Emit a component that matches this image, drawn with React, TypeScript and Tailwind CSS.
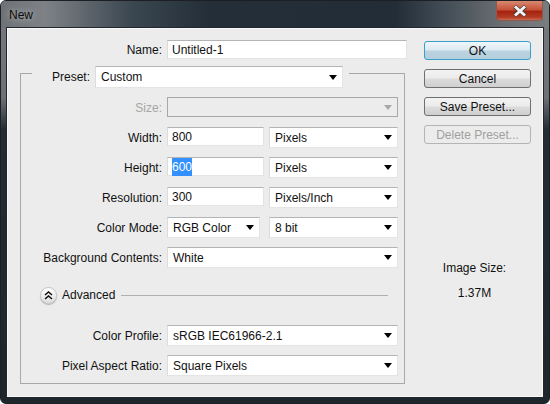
const font = "font-['Liberation_Sans',Arial,sans-serif]";

const Arrow = ({ disabled }: { disabled?: boolean }) => (
  <svg width="8" height="5" viewBox="0 0 8 5" className="shrink-0">
    <path d="M0 0H8L4 5Z" fill={disabled ? '#a8a8a8' : '#000'} />
  </svg>
);

const Select = ({ value, className }: { value: string; className: string }) => (
  <div
    className={`flex h-[21px] items-center justify-between border border-[#e4e4e4] border-t-[#b4b4b4] border-l-[#dcdcdc] bg-white pl-[5px] pr-[5px] text-[12px] text-[#111] ${className}`}
  >
    <span>{value}</span>
    <Arrow />
  </div>
);

const Input = ({ children, className }: { children: React.ReactNode; className: string }) => (
  <div
    className={`flex h-[19px] shrink-0 items-center border border-[#e4e4e4] border-t-[#b4b4b4] border-l-[#dcdcdc] bg-white pl-[4px] pt-[1px] text-[12px] text-[#111] ${className}`}
  >
    {children}
  </div>
);

const Row = ({ label, children, muted }: { label: string; children: React.ReactNode; muted?: boolean }) => (
  <div className="mt-[9px] flex h-[21px] items-start gap-[5px]">
    <div
      className={`w-[141px] shrink-0 pt-[2px] text-right text-[12px] ${muted ? 'text-[#a6a6a6]' : 'text-[#111]'}`}
    >
      {label}
    </div>
    {children}
  </div>
);

const Button = ({ label, primary, disabled }: { label: string; primary?: boolean; disabled?: boolean }) => (
  <div
    className={`flex h-[19px] w-[107px] items-center justify-center rounded-[3px] border text-[12px] ${
      primary
        ? 'border-[#3c9fcb] bg-[linear-gradient(#eef6fa_0%,#dceaf2_48%,#bcd2df_52%,#b4cedd_100%)] text-[#111]'
        : disabled
          ? 'border-[#b4b4b4] bg-[#ececec] text-[#a0a0a0]'
          : 'border-[#6f6f6f] bg-[linear-gradient(#f3f3f3_0%,#ebebeb_48%,#dcdcdc_52%,#cfcfcf_100%)] text-[#111]'
    }`}
  >
    {label}
  </div>
);

export default function App() {
  return (
    <div className={`h-[404px] w-[550px] bg-white ${font}`}>
      <div className="flex h-full flex-col rounded-[6px] border border-[#1c2024] bg-[linear-gradient(#777b7f_0%,#6d7175_24%,#222c34_32%,#1d262d_100%)] px-[6px] pb-[6px]">
        <div className="-mx-[6px] flex h-[27px] shrink-0 justify-between rounded-t-[5px] bg-[linear-gradient(90deg,#6e7276_0%,#7e8286_8%,#3a4650_24%,#232e38_38%,#222d37_72%,#3f4a54_80%,#6d7073_92%,#7a7d80_100%)] pl-[8px] pr-[6px]">
          <div className="pt-[6px] text-[12px] leading-[16px] text-[#0c0c0c] [text-shadow:0_0_6px_#c8c8c8]">New</div>
          <div className="flex h-[20px] w-[47px] items-center justify-center rounded-b-[4px] border border-t-0 border-[#8c5a52] bg-[linear-gradient(#d88a70_0%,#c4533a_45%,#a8230f_55%,#b23a22_85%,#c96b52_100%)]">
            <svg width="16" height="12" viewBox="0 0 16 12">
              <path d="M2.5 1.5 L13.5 10.5 M13.5 1.5 L2.5 10.5" stroke="#4a3a3a" strokeWidth="4.5" />
              <path d="M3 1.5 L13 10.5 M13 1.5 L3 10.5" stroke="#f4f4f4" strokeWidth="3" />
            </svg>
          </div>
        </div>
        <div className="flex min-h-0 flex-1 border border-[#f8f8f8] bg-[#ececec] outline outline-1 outline-[#20262c]">
          <div className="w-[400px] shrink-0 pl-[12px]">
            <div className="mt-[11px] flex h-[20px] items-start gap-[5px]">
              <div className="w-[142px] shrink-0 pt-[1px] text-right text-[12px] text-[#111]">Name:</div>
              <Input className="w-[240px]">Untitled-1</Input>
            </div>
            <div className="mt-[13px] h-[311px] w-[385px] border border-[#a8a8a8]">
              <div className="-mt-[8px] ml-[11px] flex h-[22px] w-fit items-center gap-[5px] bg-[#ececec] pr-[6px]">
                <div className="w-[58px] text-right text-[12px] text-[#111]">Preset:</div>
                <Select value="Custom" className="h-[22px] w-[248px]" />
              </div>
              <div className="mt-[1px]">
                <Row label="Size:" muted>
                  <div className="flex h-[20px] w-[231px] items-center justify-end border border-[#a8a8a8] bg-[#ececec] pr-[5px]">
                    <Arrow disabled />
                  </div>
                </Row>
                <Row label="Width:">
                  <Input className="w-[97px]">800</Input>
                  <Select value="Pixels" className="w-[129px]" />
                </Row>
                <Row label="Height:">
                  <Input className="w-[97px]">
                    <span className="bg-[#3390ff] text-white">600</span>
                  </Input>
                  <Select value="Pixels" className="w-[129px]" />
                </Row>
                <Row label="Resolution:">
                  <Input className="w-[97px]">300</Input>
                  <Select value="Pixels/Inch" className="w-[129px]" />
                </Row>
                <Row label="Color Mode:">
                  <Select value="RGB Color" className="w-[93px]" />
                  <Select value="8 bit" className="ml-[4px] w-[129px]" />
                </Row>
                <Row label="Background Contents:">
                  <Select value="White" className="w-[231px]" />
                </Row>
                <div className="mt-[17px] flex h-[20px] items-center pl-[19px]">
                  <div className="flex h-[17px] w-[17px] items-center justify-center rounded-full border border-[#c4c4c4] bg-[linear-gradient(#ffffff,#dedede)] shadow-[0_1px_1px_#b0b0b0]">
                    <svg width="9" height="9" viewBox="0 0 9 9">
                      <path d="M1 4 L4.5 1 L8 4 M1 8 L4.5 5 L8 8" fill="none" stroke="#111" strokeWidth="1.5" />
                    </svg>
                  </div>
                  <span className="ml-[5px] text-[12px] text-[#111]">Advanced</span>
                  <div className="ml-[6px] h-px w-[267px] bg-[#b0b0b0]" />
                </div>
                <div className="h-[11px]" />
                <Row label="Color Profile:">
                  <Select value="sRGB IEC61966-2.1" className="w-[231px]" />
                </Row>
                <Row label="Pixel Aspect Ratio:">
                  <Select value="Square Pixels" className="w-[231px]" />
                </Row>
              </div>
            </div>
          </div>
          <div className="ml-[16px] flex w-[107px] flex-col gap-[9px] pt-[12px]">
            <Button label="OK" primary />
            <Button label="Cancel" />
            <Button label="Save Preset..." />
            <Button label="Delete Preset..." disabled />
            <div className="mt-[107px] pr-[6px] text-center text-[12px] leading-[16px] text-[#111]">Image Size:</div>
            <div className="pr-[6px] text-center text-[12px] leading-[16px] text-[#111]">1.37M</div>
          </div>
        </div>
      </div>
    </div>
  );
}
